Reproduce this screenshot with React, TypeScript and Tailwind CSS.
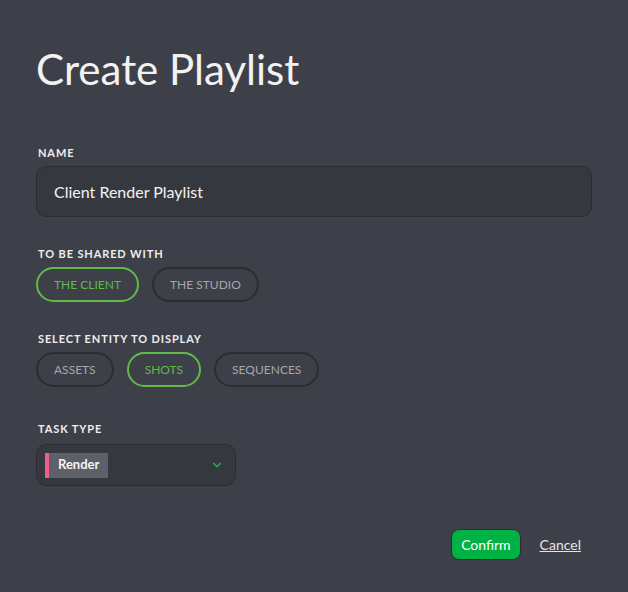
import { ChevronDown } from 'lucide-react'

const FONT = "font-['Lato','Open_Sans',sans-serif]"

function Label({ children }: { children: string }) {
  return <div className="pl-[2px] text-[11px] font-bold uppercase tracking-[0.08em] text-[#eeeeee] leading-none">{children}</div>
}

function Pill({ label, active }: { label: string; active?: boolean }) {
  return (
    <button
      className={
        'h-[35px] rounded-full border-2 px-[16px] text-[12px] uppercase leading-none ' +
        (active ? 'border-[#5fbb46] text-[#5fbb46]' : 'border-[#2b2d33] text-[#a5a7ad]')
      }
    >
      {label}
    </button>
  )
}

export default function App() {
  return (
    <div className={`min-h-[592px] w-[628px] bg-[#3e4049] px-[36px] pt-[42px] ${FONT}`}>
      <h1 className="text-[42px] leading-[54px] text-[#f2f2f2] font-normal">Create Playlist</h1>

      <div className="mt-[51px]">
        <Label>Name</Label>
        <div className="mt-[8px] flex h-[51px] items-center rounded-[10px] border border-[#2b2d33] bg-[#36383f] px-[17px] text-[16px] text-[#f2f2f2]">
          Client Render Playlist
        </div>
      </div>

      <div className="mt-[31px]">
        <Label>To be shared with</Label>
        <div className="mt-[8px] flex gap-[13px]">
          <Pill label="The client" active />
          <Pill label="The studio" />
        </div>
      </div>

      <div className="mt-[31px]">
        <Label>Select entity to display</Label>
        <div className="mt-[8px] flex gap-[13px]">
          <Pill label="Assets" />
          <Pill label="Shots" active />
          <Pill label="Sequences" />
        </div>
      </div>

      <div className="mt-[36px]">
        <Label>Task type</Label>
        <div className="mt-[10px] flex h-[42px] w-[200px] items-center rounded-[10px] border border-[#2b2d33] bg-[#36383f] pl-[8px] pr-[11px]">
          <div className="flex h-[25px] items-stretch">
            <span className="w-[4px] bg-[#e9608a]" />
            <span className="flex items-center bg-[#5e6069] px-[9px] text-[13px] font-bold text-[#f5f5f5]">Render</span>
          </div>
          <ChevronDown className="ml-auto h-[14px] w-[14px] text-[#1db954]" strokeWidth={2} />
        </div>
      </div>

      <div className="mt-[43px] flex items-center justify-end gap-[19px] pr-[11px]">
        <button className="h-[31px] rounded-[8px] border border-[#2b2d33] bg-[#00b243] px-[9px] text-[14px] text-white">
          Confirm
        </button>
        <button className="text-[14px] text-[#e5e5e5] underline">Cancel</button>
      </div>
    </div>
  )
}
